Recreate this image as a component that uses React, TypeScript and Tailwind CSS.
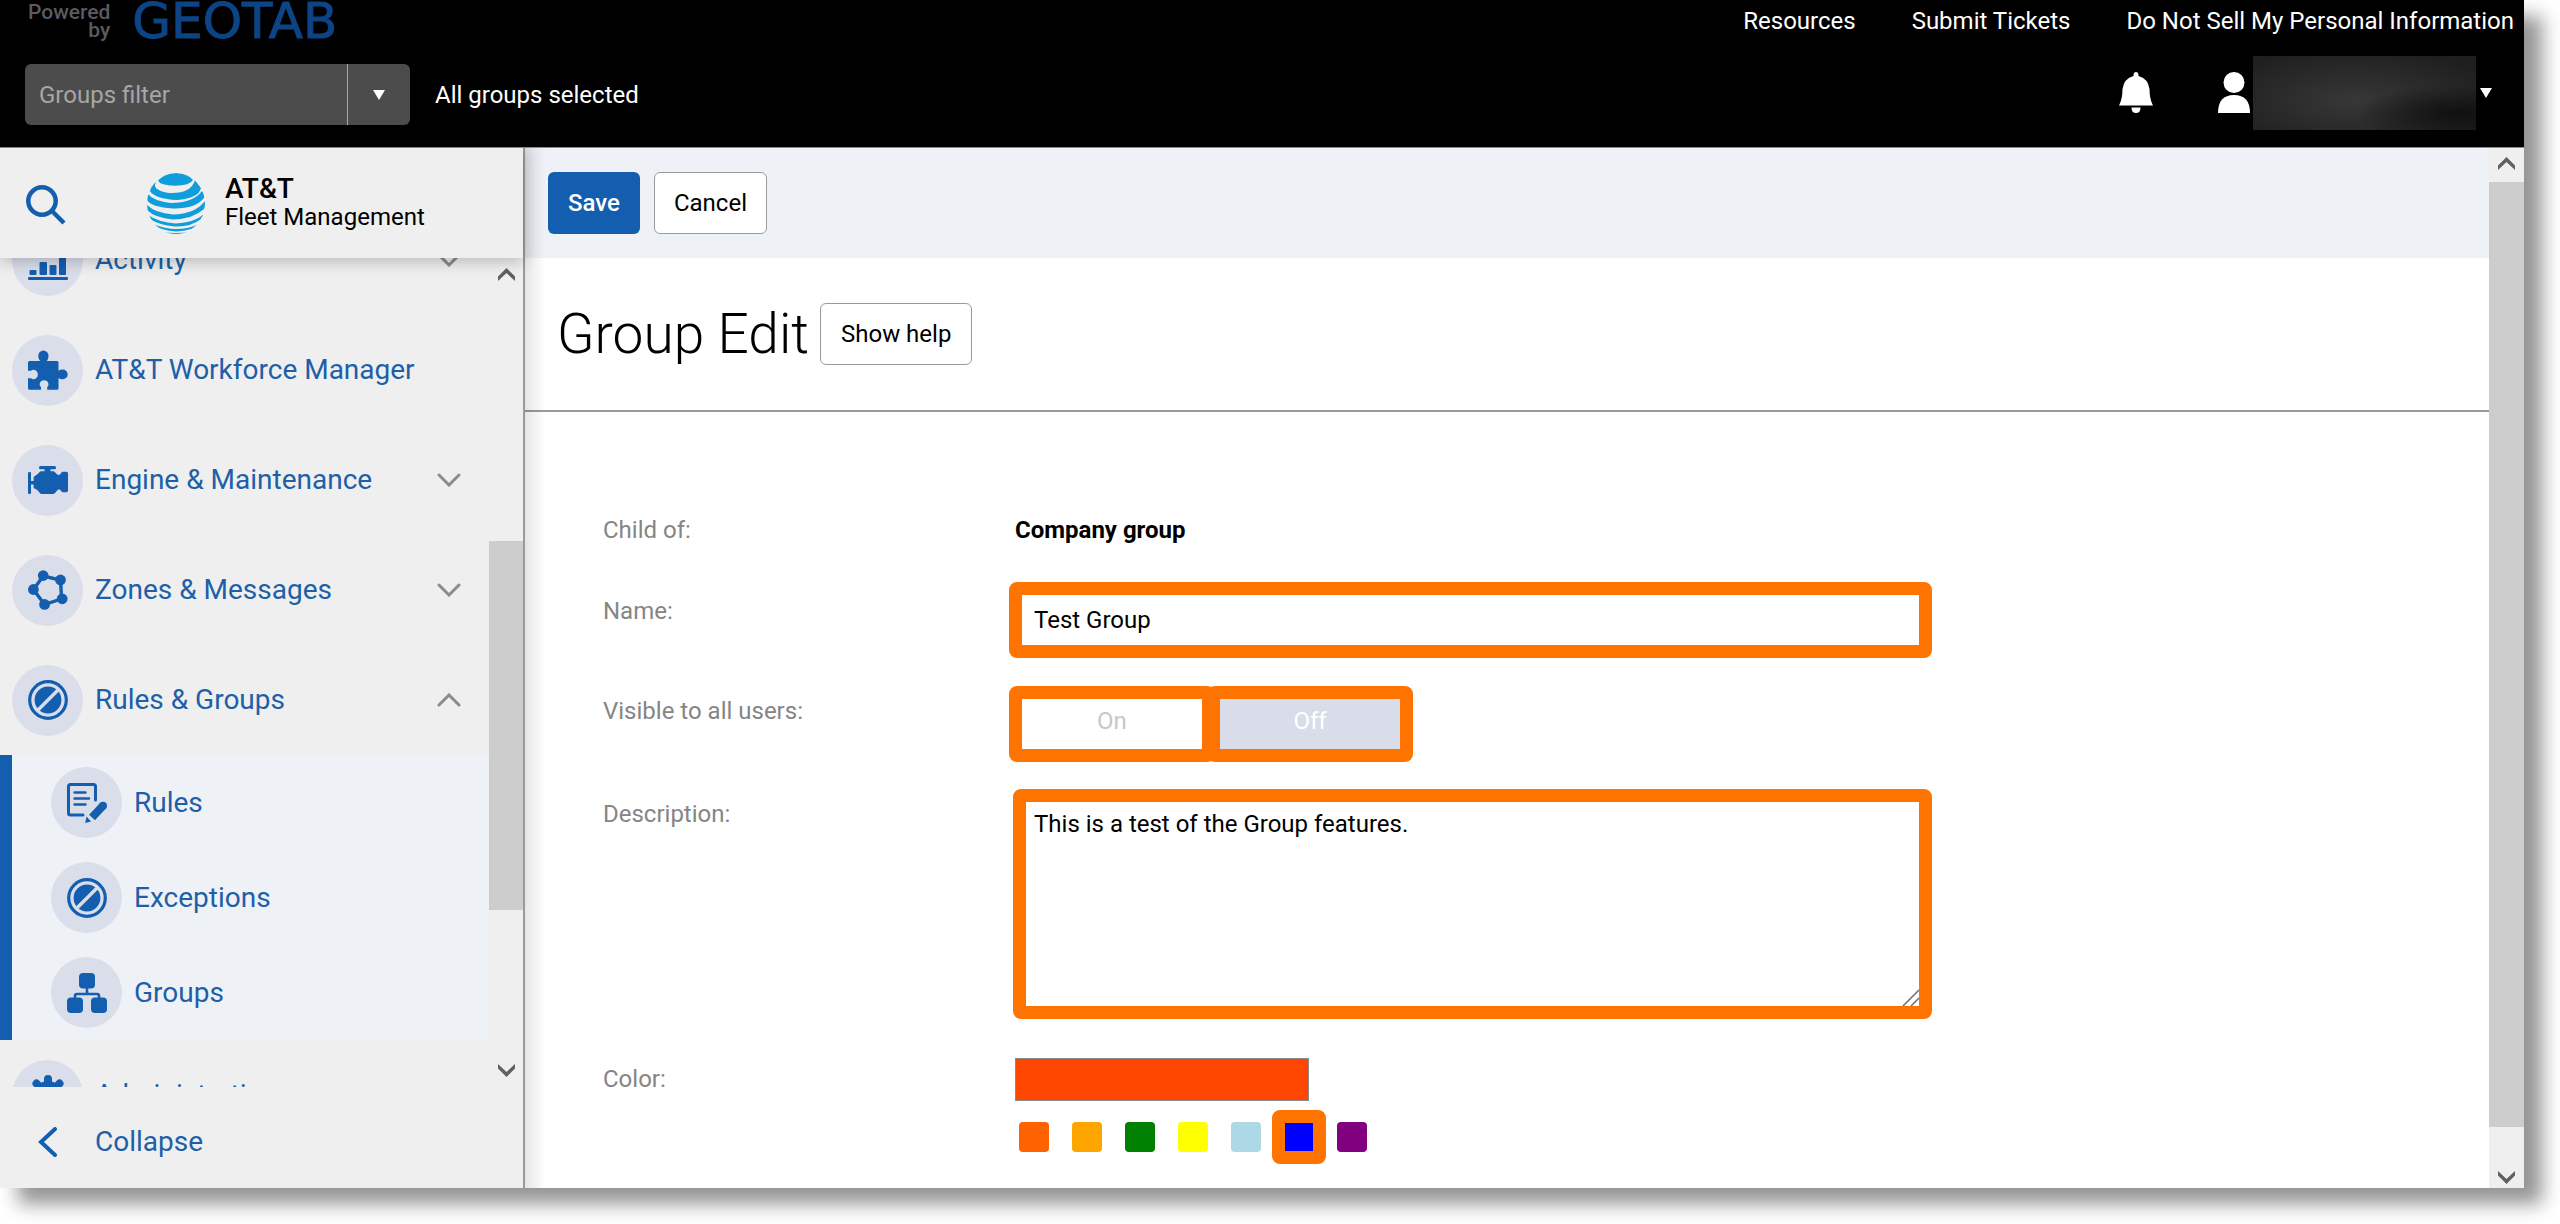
import React from "react";

type IconProps = { className?: string };

function Activity() {
  return (
    <svg viewBox="0 0 40 40" className="size-10" fill="currentColor">
      <rect x="0" y="37" width="40" height="3" rx="1" />
      <rect x="1.5" y="30" width="7" height="5" rx="1" />
      <rect x="11.5" y="22" width="7.5" height="13" rx="1" />
      <rect x="21.5" y="25" width="7" height="10" rx="1" />
      <rect x="31" y="8" width="7" height="27" rx="1" />
    </svg>
  );
}

function Puzzle() {
  return (
    <svg viewBox="0 0 40 40" className="size-10" fill="currentColor">
      <path d="M1.5 11H12.2C10.8 9.4 10.3 8 10.3 5.8A5 5.3 0 0 1 20.5 5.8C20.5 8 20 9.4 18.8 11H29A1.5 1.5 0 0 1 30.5 12.5V20.8C31.6 19.7 33 19.5 34.8 19.5A4.9 4.9 0 0 1 34.8 29.3C33 29.3 31.6 29 30.5 28V38.3A1.5 1.5 0 0 1 29 39.8H19.2V37C20.6 36 20.6 34.5 20.4 33.4A4.5 4.5 0 0 0 11.8 33.4C11.5 34.5 11.6 36 13 37V39.8H1.5A1.5 1.5 0 0 1 0 38.3V28.3H3C4 29.3 5.2 29.5 6.2 29.3A5 5 0 0 0 6.2 19.7C5.2 19.5 4 19.7 3 20.7H0V12.5A1.5 1.5 0 0 1 1.5 11Z" />
    </svg>
  );
}

function Engine() {
  return (
    <svg viewBox="0 0 40 40" className="size-10" fill="currentColor">
      <rect x="0" y="12" width="3" height="22" rx="1.3" />
      <rect x="2" y="21" width="6" height="3.5" />
      <rect x="11" y="6" width="17" height="3.2" rx="1.5" />
      <rect x="16.5" y="8" width="6" height="5" />
      <path d="M12.5 11.2H26L29.5 14.8H34V29.5H30L27 33Q26.2 34 25 34H13.6Q12.6 34 12 33.2L9.6 30.2L5.6 28V17L9.6 14Z" />
      <path d="M32 14.5L33.5 12.6Q34 11.8 35 11.8H38.4Q40 11.8 40 13.4V30.6Q40 32.2 38.4 32.2H35Q34 32.2 33.5 31.4L32 29.4Z" />
    </svg>
  );
}

function Zones() {
  return (
    <svg viewBox="0 0 40 40" className="size-10" fill="currentColor">
      <path
        d="M15.2 6L32.5 10L33.6 28.8L16.5 34.5L5.5 19.5Z"
        fill="none"
        stroke="currentColor"
        strokeWidth="3.4"
      />
      <circle cx="15.2" cy="5.6" r="5.3" />
      <circle cx="32.5" cy="10" r="5.4" />
      <circle cx="5.4" cy="19.5" r="5.4" />
      <circle cx="34.2" cy="28.8" r="5.4" />
      <circle cx="16.6" cy="34.4" r="5.4" />
    </svg>
  );
}

function Exception() {
  return (
    <svg viewBox="0 0 40 40" className="size-10">
      <circle cx="20" cy="20" r="18.3" fill="none" stroke="currentColor" strokeWidth="3.2" />
      <circle cx="20" cy="20" r="13.4" fill="currentColor" />
      <path d="M9 31L31 9" stroke="#d9deea" strokeWidth="3.4" />
    </svg>
  );
}

function RulesDoc() {
  return (
    <svg viewBox="0 0 40 40" className="size-10" fill="none" stroke="currentColor">
      <path
        d="M16 32H3.5Q1.5 32 1.5 30V3.5Q1.5 1.5 3.5 1.5H26.5Q28.5 1.5 28.5 3.5V17"
        strokeWidth="3"
        strokeLinecap="round"
      />
      <path d="M7.5 9.5H18.5M7.5 15.5H22M7.5 21.5H18.5" strokeWidth="2.4" strokeLinecap="round" />
      <path d="M25 34.5L35.5 23.2" strokeWidth="8" />
      <circle cx="36" cy="22.7" r="4" fill="currentColor" stroke="none" />
      <path d="M19.5 33.5L24 38.5L18.2 40Z" fill="currentColor" stroke="none" />
    </svg>
  );
}

function GroupsTree() {
  return (
    <svg viewBox="0 0 40 40" className="size-10" fill="currentColor">
      <rect x="12" y="0" width="16" height="15.6" rx="4" />
      <rect x="0" y="24.5" width="16" height="15.5" rx="4" />
      <rect x="24" y="24.5" width="16" height="15.5" rx="4" />
      <path d="M20 14V21M8 26V23Q8 21 10 21H30Q32 21 32 23V26" fill="none" stroke="currentColor" strokeWidth="2.6" />
    </svg>
  );
}

function Gear() {
  return (
    <svg viewBox="0 0 40 40" className="size-10">
      <circle cx="20" cy="20" r="10" fill="none" stroke="currentColor" strokeWidth="8" />
      <path
        d="M20 4V8M20 32V36M4 20H8M32 20H36M8.5 8.5L12 12M28 28L31.5 31.5M31.5 8.5L28 12M12 28L8.5 31.5"
        stroke="currentColor"
        strokeWidth="8"
        strokeLinecap="round"
      />
    </svg>
  );
}

function Chevron({ className }: IconProps) {
  return (
    <svg viewBox="0 0 24 14" className={className} fill="none" stroke="currentColor" strokeWidth="3" strokeLinecap="round">
      <path d="M2 2L12 12L22 2" />
    </svg>
  );
}

function ScrollArrow({ className }: IconProps) {
  return (
    <svg viewBox="0 0 17 13" className={className} fill="#606060">
      <path d="M8.5 0L17 8.5V13L8.5 5L0 13V8.5Z" />
    </svg>
  );
}

function Caret() {
  return (
    <svg viewBox="0 0 12 10" className="h-[10px] w-3" fill="#fff">
      <path d="M0 0H12L6 10Z" />
    </svg>
  );
}

function Globe() {
  return (
    <svg viewBox="0 0 58 61" className="h-[61px] w-[58px] shrink-0">
      <defs>
        <clipPath id="globe">
          <ellipse cx="29" cy="30.5" rx="29" ry="30.5" />
        </clipPath>
      </defs>
      <g clipPath="url(#globe)" fill="#0f9ddb">
        <path d="M11 7.5Q18 0 29 0T46 7Q43 12.5 28 12.8Q13 12.5 11 7.5Z" />
        <path d="M9 9Q4 17 22 20Q44 21 48 7L54 15Q52 25 30 27Q8 26 3 18Q3 12 9 9Z" />
        <path d="M0 20Q6 28 24 30Q46 30 55 18Q58 22 57 25Q48 36 26 35.5Q4 34 0 27Z" />
        <path d="M0 32Q8 40 26 41.5Q48 41 58 28Q59 34 57 36Q46 46 26 46.5Q8 45 0 37Z" />
        <path d="M1 42Q12 49.5 29 50.5Q48 49.5 57 41Q56 44 54 46Q44 54 28 53.5Q12 52 3 46Z" />
        <path d="M6 51Q18 56 29 56Q42 56 52 51Q46 58 29 58.5Q14 58 6 51Z" />
        <path d="M16 59Q29 61 42 59L36 61H22Z" />
      </g>
    </svg>
  );
}

function NavButton({
  icon,
  label,
  arrow,
  nested,
}: {
  icon: React.ReactNode;
  label: string;
  arrow?: "up" | "down";
  nested?: boolean;
}) {
  return (
    <button
      type="button"
      className={
        nested
          ? "flex h-[95px] w-full items-center gap-3 pl-[39px] text-left"
          : "flex h-[110px] w-full items-center gap-3 pr-7 pl-3 text-left"
      }
    >
      <span className="flex size-[71px] shrink-0 items-center justify-center rounded-full bg-[#d9deea] text-[#145eb0]">
        {icon}
      </span>
      <span className="flex-1 text-[28px] whitespace-nowrap">{label}</span>
      {arrow === "down" && <Chevron className="h-[14px] w-6 text-[#8c8c8c]" />}
      {arrow === "up" && <Chevron className="h-[14px] w-6 rotate-180 text-[#8c8c8c]" />}
    </button>
  );
}

function Sidebar() {
  return (
    <aside className="flex w-[525px] shrink-0 flex-col border-r-2 border-[#9a9a9a] bg-[#efefef] text-[#205fa8]">
      <div className="z-10 flex h-[110px] shrink-0 items-center pl-[26px] shadow-[0_4px_14px_rgba(0,0,0,0.22)]">
        <button type="button" aria-label="Search" className="pt-1 text-[#145eb0]">
          <svg viewBox="0 0 40 40" className="size-10" fill="none" stroke="currentColor" strokeWidth="4.5">
            <circle cx="16" cy="16" r="13.7" />
            <path d="M25.5 25.5L38 38" />
          </svg>
        </button>
        <a href="#home" className="ml-[81px] flex items-center gap-5 text-black">
          <Globe />
          <span className="flex flex-col text-2xl leading-7">
            <span className="text-[28px] font-medium">AT&amp;T</span>
            <span>Fleet Management</span>
          </span>
        </a>
      </div>
      <div className="flex min-h-0 flex-1 overflow-hidden">
        <nav aria-label="Main" className="min-w-0 flex-1">
          <ul className="-mt-[53px]">
            <li>
              <NavButton icon={<Activity />} label="Activity" arrow="down" />
            </li>
            <li>
              <NavButton icon={<Puzzle />} label="AT&amp;T Workforce Manager" />
            </li>
            <li>
              <NavButton icon={<Engine />} label="Engine &amp; Maintenance" arrow="down" />
            </li>
            <li>
              <NavButton icon={<Zones />} label="Zones &amp; Messages" arrow="down" />
            </li>
            <li>
              <NavButton icon={<Exception />} label="Rules &amp; Groups" arrow="up" />
              <ul className="border-l-12 border-[#145eb0] bg-[#eef2f7]">
                <li>
                  <NavButton nested icon={<RulesDoc />} label="Rules" />
                </li>
                <li>
                  <NavButton nested icon={<Exception />} label="Exceptions" />
                </li>
                <li>
                  <NavButton nested icon={<GroupsTree />} label="Groups" />
                </li>
              </ul>
            </li>
            <li>
              <NavButton icon={<Gear />} label="Administration" />
            </li>
          </ul>
        </nav>
        <div className="flex w-[34px] flex-col items-center pt-[10px] pb-[10px]">
          <ScrollArrow className="h-[13px] w-[17px]" />
          <div className="flex w-full flex-1 flex-col">
            <div className="flex-[260]" />
            <div className="flex-[369] bg-[#cdcdcd]" />
            <div className="flex-[154]" />
          </div>
          <ScrollArrow className="h-[13px] w-[17px] rotate-180" />
        </div>
      </div>
      <button type="button" className="flex h-[101px] shrink-0 items-center gap-[38px] pt-2 pl-[38px]">
        <svg
          viewBox="0 0 19 30"
          className="h-[30px] w-[19px] text-[#145eb0]"
          fill="none"
          stroke="currentColor"
          strokeWidth="4"
          strokeLinecap="round"
        >
          <path d="M17 2L3 15L17 28" />
        </svg>
        <span className="text-[28px]">Collapse</span>
      </button>
    </aside>
  );
}

function Header() {
  return (
    <header className="flex h-[147px] shrink-0 flex-col bg-black text-white">
      <div className="flex h-[42px] items-center justify-between pr-[10px] pl-7">
        <div className="flex items-center gap-[22px]">
          <span className="flex flex-col text-right text-[21px] leading-[18px] font-medium text-[#5a5a60]">
            <span>Powered</span>
            <span>by</span>
          </span>
          <span className="font-['DejaVu_Sans'] text-[50px] leading-10 text-[#0d4485] [-webkit-text-stroke:1px]">
            GEOTAB
          </span>
        </div>
        <nav aria-label="Links" className="flex gap-14 text-2xl">
          <a href="#resources">Resources</a>
          <a href="#tickets">Submit Tickets</a>
          <a href="#privacy">Do Not Sell My Personal Information</a>
        </nav>
      </div>
      <div className="flex flex-1 items-center justify-between pr-8 pl-[25px] text-2xl">
        <div className="flex items-center gap-[25px]">
          <div className="flex h-[61px] w-[385px] rounded-md bg-[#4c4c4c]">
            <input
              aria-label="Groups filter"
              placeholder="Groups filter"
              className="w-0 flex-1 px-[14px] placeholder:text-[#a6a6a6]"
            />
            <button
              type="button"
              aria-label="Open groups filter"
              className="flex w-[63px] items-center justify-center border-l border-[#a8a8a8]"
            >
              <Caret />
            </button>
          </div>
          <span>All groups selected</span>
        </div>
        <div className="flex items-center pb-1">
          <button type="button" aria-label="Notifications">
            <svg viewBox="0 0 34 41" className="h-[41px] w-[34px]" fill="#fff">
              <path d="M17 0Q19.5 0 19.5 4Q29 6.5 30.5 17Q30.5 27 34 33.5H0Q3.5 27 3.5 17Q5 6.5 14.5 4Q14.5 0 17 0Z" />
              <path d="M12.5 35.5H21.5Q21.5 41 17 41Q12.5 41 12.5 35.5Z" />
            </svg>
          </button>
          <button type="button" aria-label="User menu" className="ml-[65px] flex items-center">
            <svg viewBox="0 0 32 41" className="h-[41px] w-8" fill="#fff">
              <ellipse cx="16" cy="10.5" rx="10.5" ry="10.5" />
              <path d="M0 41Q0 23 16 23Q32 23 32 41Z" />
            </svg>
            <span className="mr-1 ml-[3px] h-[74px] w-[223px] bg-[#242424] bg-[radial-gradient(ellipse_at_92%_78%,#101010_0%,transparent_35%),radial-gradient(ellipse_at_45%_60%,#373737_0%,#1f1f1f_85%)]" />
            <Caret />
          </button>
        </div>
      </div>
    </header>
  );
}

const swatches = [
  { name: "Orange red", style: "bg-[#ff6200]" },
  { name: "Orange", style: "bg-[#ffa500]" },
  { name: "Green", style: "bg-[#008000]" },
  { name: "Yellow", style: "bg-[#ffff00]" },
  { name: "Light blue", style: "bg-[#add8e6]" },
  { name: "Blue", style: "bg-[#0000ff]" },
  { name: "Purple", style: "bg-[#800080]" },
];

function GroupForm() {
  return (
    <form className="pt-[103px] pl-[78px] text-2xl leading-[30px] text-black">
      <div className="flex">
        <span className="w-[406px] shrink-0 text-[#858585]">Child of:</span>
        <span className="pl-[6px] font-bold">Company group</span>
      </div>
      <div className="mt-[37px] flex">
        <label htmlFor="name" className="w-[406px] shrink-0 pt-[14px] text-[#858585]">
          Name:
        </label>
        <input
          id="name"
          defaultValue="Test Group"
          className="h-[76px] w-[923px] rounded-lg border-13 border-[#ff7300] px-3"
        />
      </div>
      <div className="mt-7 flex">
        <span id="visible" className="w-[406px] shrink-0 pt-[10px] text-[#858585]">
          Visible to all users:
        </span>
        <div role="group" aria-labelledby="visible" className="flex">
          <button type="button" className="h-[76px] w-[206px] rounded-lg border-13 border-[#ff7300] bg-white pb-[6px] text-[#c6c8ce]">
            On
          </button>
          <button
            type="button"
            className="-ml-2 h-[76px] w-[206px] rounded-lg border-13 border-[#ff7300] bg-[#d8dde9] pb-[6px] text-white"
          >
            Off
          </button>
        </div>
      </div>
      <div className="mt-[27px] flex">
        <label htmlFor="description" className="w-[410px] shrink-0 pt-[10px] text-[#858585]">
          Description:
        </label>
        <div className="relative w-[919px]">
          <textarea
            id="description"
            defaultValue="This is a test of the Group features."
            className="block h-[230px] w-full resize-none rounded-lg border-13 border-[#ff7300] px-2 py-[7px]"
          />
          <svg viewBox="0 0 17 17" className="absolute right-[13px] bottom-[13px] size-[17px]" stroke="#6b6b6b" strokeWidth="1.5">
            <path d="M1 17L17 1M9 17L17 9" />
          </svg>
        </div>
      </div>
      <div className="mt-[39px] flex">
        <span id="color" className="w-[412px] shrink-0 pt-[6px] text-[#858585]">
          Color:
        </span>
        <div>
          <div className="h-[43px] w-[294px] border border-[#8a8a8a] bg-[#ff4600]" />
          <div role="radiogroup" aria-labelledby="color" className="mt-[9px] flex h-[54px] items-center gap-[23px] pl-1">
            {swatches.map((s) =>
              s.name === "Blue" ? (
                <input
                  key={s.name}
                  type="radio"
                  name="color"
                  aria-label={s.name}
                  defaultChecked
                  className="-mx-3 h-[54px] w-[54px] appearance-none rounded-lg border-13 border-[#ff7300] bg-[#0000ff]"
                />
              ) : (
                <input
                  key={s.name}
                  type="radio"
                  name="color"
                  aria-label={s.name}
                  className={"size-[30px] appearance-none rounded " + s.style}
                />
              ),
            )}
          </div>
        </div>
      </div>
    </form>
  );
}

export default function App() {
  return (
    <div className="h-screen overflow-hidden bg-white pr-9 pb-9 font-[Roboto,sans-serif]">
      <div className="flex h-full flex-col shadow-[18px_16px_18px_rgba(0,0,0,0.42)]">
        <Header />
        <div className="flex min-h-0 flex-1 border-t border-[#8a8a8a] bg-white">
          <Sidebar />
          <main className="relative min-w-0 flex-1 overflow-hidden">
            <div className="flex h-[110px] items-center gap-[14px] bg-[#eef2f7] pl-[23px] text-2xl font-medium">
              <button type="button" className="h-[62px] rounded-md bg-[#145eb0] px-5 text-white">
                Save
              </button>
              <button type="button" className="h-[62px] rounded-md border border-[#9a9a9a] bg-white px-[19px] font-normal text-black">
                Cancel
              </button>
            </div>
            <div className="flex h-[154px] items-center gap-[11px] border-b-2 border-[#9a9a9a] pl-8">
              <h1 className="text-[55px] font-light text-black">Group Edit</h1>
              <button type="button" className="h-[62px] rounded-md border border-[#9a9a9a] bg-white px-5 text-2xl text-black">
                Show help
              </button>
            </div>
            <GroupForm />
            <div className="pointer-events-none absolute inset-y-0 left-0 w-5 bg-linear-to-r from-black/10 to-transparent" />
          </main>
          <div className="flex w-[35px] shrink-0 flex-col items-center bg-[#efefef] pt-[9px] pb-1">
            <ScrollArrow className="h-[13px] w-[17px]" />
            <div className="flex w-full flex-1 flex-col pt-3">
              <div className="flex-[945] bg-[#cdcdcd]" />
              <div className="flex-[44]" />
            </div>
            <ScrollArrow className="h-[13px] w-[17px] rotate-180" />
          </div>
        </div>
      </div>
    </div>
  );
}
